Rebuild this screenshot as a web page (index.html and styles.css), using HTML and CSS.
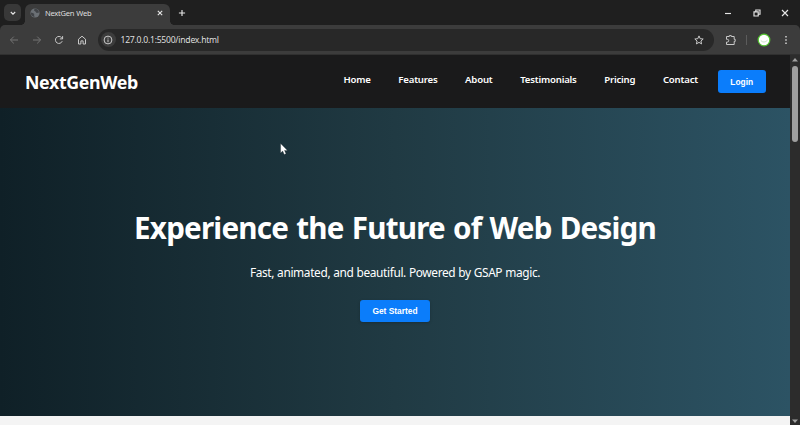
FILE: index.html
```html
<!DOCTYPE html>
<html lang="en">
<head>
<meta charset="utf-8">
<title>NextGen Web</title>
<link rel="stylesheet" href="styles.css">
</head>
<body>
<div class="browser">
  <div class="tabstrip">
    <div class="tab-search"><svg width="8" height="8" viewBox="0 0 8 8"><path d="M1.8 3L4 5.1 6.2 3" class="ln bright"/></svg></div>
    <div class="tab">
      <svg class="globe" width="10" height="10" viewBox="0 0 10 10"><circle cx="5" cy="5" r="4.6" fill="#6b7075"/><path d="M.8 4.6l2 .3 1.6 1-.4 1 .6 2A4.2 4.2 0 0 1 .8 4.6zM4.6.8L4 2.4l1.4 1L6.6 5l2.4-.6A4.2 4.2 0 0 0 4.6.8z" fill="#404347"/></svg>
      <span class="tab-title">NextGen Web</span>
      <svg class="tab-close" width="8" height="8" viewBox="0 0 8 8"><path d="M1.8 1.8l4.4 4.4M6.2 1.8L1.8 6.2" class="ln close"/></svg>
    </div>
    <svg class="new-tab" width="8" height="8" viewBox="0 0 8 8"><path d="M4 .9v6.2M.9 4h6.2" class="ln bright"/></svg>
    <div class="window-controls">
      <svg width="8" height="8" viewBox="0 0 8 8"><path d="M1 4.5h6" class="ln bright"/></svg>
      <svg width="8" height="8" viewBox="0 0 8 8"><path d="M1 2.8h4.2V7H1zM2.8 2.5V1H7v4.2H5.5" class="ln bright"/></svg>
      <svg width="8" height="8" viewBox="0 0 8 8"><path d="M1 1l6 6M7 1L1 7" class="ln bright"/></svg>
    </div>
  </div>
  <div class="toolbar">
    <div class="nav-icons">
      <svg width="10" height="10" viewBox="0 0 10 10"><path d="M9 5H1.4M4.8 1.6L1.4 5l3.4 3.4" class="ln dim"/></svg>
      <svg width="10" height="10" viewBox="0 0 10 10"><path d="M1 5h7.6M5.2 1.6L8.6 5 5.2 8.4" class="ln dim"/></svg>
      <svg width="10" height="10" viewBox="0 0 10 10"><path d="M8.2 6.2A3.5 3.5 0 1 1 7.7 2.8L8.5 3.7M8.6 1.1v2.8H5.8" class="ln"/></svg>
      <svg width="10" height="10" viewBox="0 0 10 10"><path d="M1.5 4.2L5 1.2l3.5 3V9H6.1V5.9H3.9V9H1.5z" class="ln"/></svg>
    </div>
    <div class="address">
      <div class="site-info"><svg width="10" height="10" viewBox="0 0 10 10"><circle cx="5" cy="5" r="3.9" class="ln"/><path d="M5 4.5v2.7M5 2.6v1" class="ln"/></svg></div>
      <span class="url">127.0.0.1:5500/index.html</span>
      <svg class="star" width="10" height="10" viewBox="0 0 10 10"><path d="M5 .9l1.2 2.8 3 .3-2.3 2 .7 2.9L5 7.4 2.4 8.9l.7-2.9L.8 4l3-.3z" class="ln"/></svg>
    </div>
    <svg class="puzzle" width="12" height="12" viewBox="0 0 12 12"><path d="M1.5 2.5h2.8V1.6h2v.9h2.9v2.8h1v2.1h-1v3.1H1.5V8.1h.8a1.3 1.3 0 0 0 0-2.8h-.8z" class="ln"/></svg>
    <i class="divider"></i>
    <svg class="avatar" width="14" height="14" viewBox="0 0 14 14"><circle cx="7" cy="7" r="5.8" fill="#fff" stroke="#54c431" stroke-width="1.2"/><path d="M3.8 7.5Q7 10.8 10.5 7.2" fill="none" stroke="#b9dcb4" stroke-width=".8"/></svg>
    <svg class="more" width="4" height="10" viewBox="0 0 4 10"><path d="M1.3 1h1.4v1.4H1.3zM1.3 4.3h1.4v1.4H1.3zM1.3 7.6h1.4V9H1.3z" fill="#ddd"/></svg>
  </div>
  <div class="viewport">
    <div class="page">
      <header class="site-header">
        <div class="logo">NextGenWeb</div>
        <nav class="links">
          <a>Home</a><a>Features</a><a>About</a><a>Testimonials</a><a>Pricing</a><a>Contact</a>
        </nav>
        <button class="btn login">Login</button>
      </header>
      <main class="hero">
        <h1>Experience the Future of Web Design</h1>
        <p>Fast, animated, and beautiful. Powered by GSAP magic.</p>
        <button class="btn start">Get Started</button>
      </main>
      <div class="next-section"></div>
    </div>
    <div class="scrollbar">
      <svg width="6" height="4" viewBox="0 0 6 4"><path d="M3 0l3 3.6H0z" fill="#a0a0a0"/></svg>
      <i class="thumb"></i>
      <svg class="down" width="6" height="4" viewBox="0 0 6 4"><path d="M0 .4h6L3 4z" fill="#a0a0a0"/></svg>
    </div>
  </div>
</div>
<svg class="cursor" width="8" height="12" viewBox="0 0 8 12"><path d="M.6.5v9.6l2.1-2 1.5 3.4 1.8-.8-1.5-3.3h3z" fill="#fff" stroke="#142025" stroke-width=".3"/></svg>
</body>
</html>
```
FILE: styles.css
```css
* { box-sizing: border-box; }
body { margin: 0; width: 800px; height: 425px; overflow: hidden; font-family: "Noto Sans", "Open Sans", sans-serif; }
svg { display: block; flex: none; }
.ln { fill: none; stroke: #c9c9c9; stroke-width: 1; }
.ln.bright { stroke: #e6e6e6; stroke-width: 1.15; }
.ln.close { stroke: #e6e6e6; stroke-width: 1.1; }
.ln.dim { stroke: #747474; }
.browser { height: 425px; display: flex; flex-direction: column; background: #1f1f1f; }

.tabstrip { height: 25px; display: flex; align-items: center; padding-left: 4px; flex: none; }
.tab-search { width: 17px; height: 17px; border-radius: 5px; background: #383838; display: grid; place-items: center; }
.tab { position: relative; width: 145px; height: 21px; margin: 4px 0 0 4px; padding: 0 6px 4px 5px; border-radius: 6px 6px 0 0; background: #3c3c3c; display: flex; align-items: center; }
.tab::before, .tab::after { content: ""; position: absolute; bottom: 0; width: 5px; height: 5px; }
.tab::before { left: -5px; background: radial-gradient(circle at 0 0, transparent 5px, #3c3c3c 5.3px); }
.tab::after { right: -5px; background: radial-gradient(circle at 100% 0, transparent 5px, #3c3c3c 5.3px); }
.tab-title { margin-left: 5px; font-size: 7.6px; line-height: 12px; letter-spacing: -0.3px; word-spacing: 0.6px; color: #dedede; white-space: nowrap; }
.tab-close { margin-left: auto; }
.new-tab { margin-left: 8px; }
.window-controls { display: flex; gap: 20.5px; margin: 0 11px 0 auto; }

.toolbar { height: 29px; flex: none; display: flex; align-items: center; background: #3c3c3c; border-radius: 5px 5px 0 0; padding-left: 9px; }
.nav-icons { display: flex; gap: 12.5px; width: 88.5px; }
.address { width: 616px; height: 22px; border-radius: 11px; background: #282828; display: flex; align-items: center; padding: 0 10px 0 3px; }
.site-info { width: 15px; height: 15px; border-radius: 50%; background: #3c3c3c; display: grid; place-items: center; }
.url { margin-left: 5px; font-size: 8.6px; line-height: 14px; letter-spacing: -0.25px; color: #dedede; white-space: nowrap; }
.star { margin-left: auto; }
.puzzle { margin-left: 11px; }
.divider { width: 1px; height: 10px; margin-left: 9px; background: #5c5c5c; }
.avatar { margin-left: 10px; }
.more { margin-left: 13px; }

.viewport { flex: 1; display: flex; min-height: 0; border-top: 1px solid #303030; }
.page { width: 790px; display: flex; flex-direction: column; background: #f4f4f4; }
.site-header { height: 53px; flex: none; background: #1a1a1b; display: flex; align-items: center; padding: 0 24.5px 0 25px; color: #fff; }
.logo { font-size: 17.8px; font-weight: 700; line-height: 24px; letter-spacing: -0.35px; }
.links { display: flex; gap: 27.6px; margin: -4px 20px 0 auto; font-size: 9.6px; font-weight: 600; line-height: 14px; letter-spacing: -0.19px; }
.btn { display: flex; align-items: center; justify-content: center; border: 0; padding: 0; border-radius: 3px; background: #0b7dfb; color: #fff; font-family: "Liberation Sans", Arial, sans-serif; font-weight: 700; font-size: 8.4px; }
.login { width: 47.5px; height: 22.5px; }
.hero { height: 308px; flex: none; display: flex; flex-direction: column; align-items: center; padding-top: 99px; background: linear-gradient(to right, #0f2027, #203a43 50%, #2c5364); color: #fff; white-space: nowrap; }
.hero h1 { margin: 0; font-size: 29.6px; line-height: 42px; font-weight: 700; letter-spacing: -0.8px; word-spacing: 1.3px; }
.hero p { margin: 14px 0 0; font-size: 11.9px; line-height: 18px; letter-spacing: -0.36px; word-spacing: 0.25px; }
.start { width: 70px; height: 22px; margin-top: 19px; box-shadow: 0 1px 3px rgba(0, 0, 0, .2); }
.next-section { flex: 1; background: #f4f4f4; }
.scrollbar { width: 10px; background: #2c2c2c; display: flex; flex-direction: column; align-items: center; padding: 3px 0 2px; }
.thumb { width: 6px; height: 76px; margin-top: 4px; border-radius: 3px; background: #9f9f9f; }
.down { margin-top: auto; }
.cursor { position: absolute; left: 280px; top: 143px; }
```
